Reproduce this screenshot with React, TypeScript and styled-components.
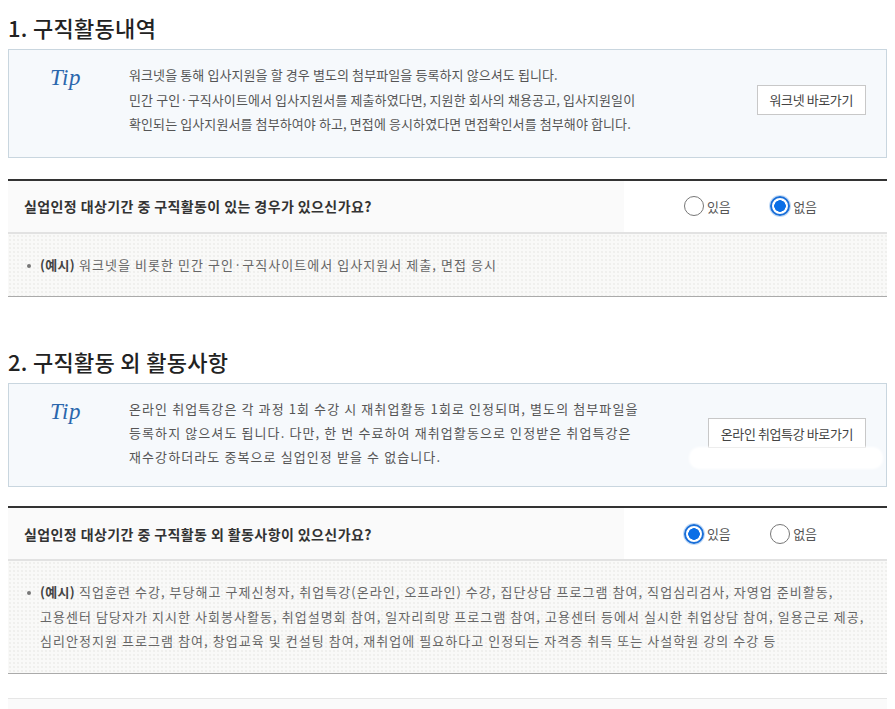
import styled, { createGlobalStyle, css } from "styled-components";

const GlobalStyle = createGlobalStyle`
  html, body {
    margin: 0;
    padding: 0;
    background: #fff;
  }
  body {
    font-family: "Noto Sans CJK KR", "Noto Sans", sans-serif;
    color: #333;
  }
`;

const Page = styled.div`
  padding: 0 8px;
  width: 879px;
`;

const Section = styled.section<{ $gap: number }>`
  margin-top: ${({ $gap }) => $gap}px;
`;

const SectionTitle = styled.h2`
  margin: 0 0 4px;
  height: 36px;
  line-height: 36px;
  font-size: 22px;
  font-weight: 500;
  color: #222;
  letter-spacing: 0.3px;
`;

const TipBox = styled.div<{ $padBottom: number }>`
  position: relative;
  display: grid;
  grid-template-columns: 120px 1fr auto;
  align-items: center;
  padding: 13px 20px ${({ $padBottom }) => $padBottom}px 0;
  background: #f6f9fc;
  border: 1px solid #c9d6df;
`;

const TipMark = styled.span`
  align-self: start;
  padding: 3px 0 0 41px;
  font-family: "Liberation Serif", serif;
  font-style: italic;
  font-size: 23px;
  line-height: 24px;
  color: #2b67ad;
  letter-spacing: 0.5px;
`;

const TipText = styled.p<{ $tight?: boolean }>`
  margin: 0;
  font-size: 13px;
  color: #555;
  white-space: nowrap;
  ${({ $tight }) =>
    $tight
      ? css`
          line-height: 24.5px;
          letter-spacing: 0.1px;
        `
      : css`
          line-height: 24px;
          letter-spacing: 1.1px;
        `}
`;

const LinkButton = styled.button`
  height: 30px;
  padding: 0 12px;
  background: #fff;
  border: 1px solid #c8c8c8;
  font-family: inherit;
  font-size: 13px;
  color: #444;
  letter-spacing: -0.4px;
  cursor: pointer;
`;

const Smudge = styled.div`
  position: absolute;
  left: 680px;
  top: 63px;
  width: 194px;
  height: 22px;
  background: #fff;
  border-radius: 10px;
  filter: blur(0.8px);
`;

const Question = styled.div<{ $gap: number }>`
  margin-top: ${({ $gap }) => $gap}px;
  border-top: 2px solid #333;
  border-bottom: 1px solid #aaa;
`;

const QuestionRow = styled.div`
  display: grid;
  grid-template-columns: 1fr 263px;
  height: 51px;
  border-bottom: 2px solid #e2e2e2;
`;

const QuestionLabel = styled.div`
  display: flex;
  align-items: center;
  padding-left: 16px;
  background: #fafafa;
  font-size: 14px;
  font-weight: 700;
  color: #333;
  letter-spacing: 0.4px;
`;

const RadioGroup = styled.div`
  display: flex;
  align-items: center;
  justify-content: flex-start;
  gap: 40px;
  padding-left: 60px;
  background: #fff;
`;

const RadioLabel = styled.label`
  display: flex;
  align-items: center;
  gap: 3px;
  font-size: 13px;
  color: #555;
  letter-spacing: -0.3px;
  cursor: pointer;
`;

const RadioDot = styled.span<{ $checked: boolean }>`
  box-sizing: border-box;
  width: 20px;
  height: 20px;
  border-radius: 50%;
  ${({ $checked }) =>
    $checked
      ? css`
          border: 2px solid #1a6fd8;
          background: radial-gradient(circle, #0a6ee6 0 5.5px, #fff 6px);
          box-shadow: 0 0 0 1px #c4dcf7;
        `
      : css`
          border: 1px solid #777;
          background: #fff;
        `}
`;

const Example = styled.ul`
  margin: 0;
  padding: 19px 20px 19px 19px;
  list-style: none;
  background-color: #f9f9f8;
  background-image: radial-gradient(#efefed 0.7px, transparent 1px);
  background-size: 4px 4px;
`;

const ExampleItem = styled.li`
  position: relative;
  padding-left: 13px;
  font-size: 13px;
  line-height: 24.5px;
  color: #666;
  letter-spacing: 1.05px;
  white-space: nowrap;

  &::before {
    content: "";
    position: absolute;
    left: 0;
    top: 11px;
    width: 4px;
    height: 4px;
    border-radius: 50%;
    background: #777;
  }

  b {
    color: #444;
    font-weight: 700;
    letter-spacing: 0.3px;
  }
`;

const NextBlock = styled.div`
  margin-top: 24px;
  height: 20px;
  border-top: 1px solid #e6e6e6;
  background: #fafafa;
`;

function Radios({ yes }: { yes: boolean }) {
  return (
    <RadioGroup>
      <RadioLabel>
        <RadioDot $checked={yes} />
        있음
      </RadioLabel>
      <RadioLabel>
        <RadioDot $checked={!yes} />
        없음
      </RadioLabel>
    </RadioGroup>
  );
}

export default function App() {
  return (
    <Page>
      <GlobalStyle />
      <Section $gap={9}>
        <SectionTitle>1. 구직활동내역</SectionTitle>
        <TipBox $padBottom={20}>
          <TipMark>Tip</TipMark>
          <TipText $tight>
            워크넷을 통해 입사지원을 할 경우 별도의 첨부파일을 등록하지 않으셔도 됩니다.
            <br />
            민간 구인·구직사이트에서 입사지원서를 제출하였다면, 지원한 회사의 채용공고, 입사지원일이
            <br />
            확인되는 입사지원서를 첨부하여야 하고, 면접에 응시하였다면 면접확인서를 첨부해야 합니다.
          </TipText>
          <LinkButton type="button">워크넷 바로가기</LinkButton>
        </TipBox>
        <Question $gap={21}>
          <QuestionRow>
            <QuestionLabel>실업인정 대상기간 중 구직활동이 있는 경우가 있으신가요?</QuestionLabel>
            <Radios yes={false} />
          </QuestionRow>
          <Example>
            <ExampleItem>
              <b>(예시)</b> 워크넷을 비롯한 민간 구인·구직사이트에서 입사지원서 제출, 면접 응시
            </ExampleItem>
          </Example>
        </Question>
      </Section>

      <Section $gap={46}>
        <SectionTitle>2. 구직활동 외 활동사항</SectionTitle>
        <TipBox $padBottom={17}>
          <TipMark>Tip</TipMark>
          <TipText>
            온라인 취업특강은 각 과정 1회 수강 시 재취업활동 1회로 인정되며, 별도의 첨부파일을
            <br />
            등록하지 않으셔도 됩니다. 다만, 한 번 수료하여 재취업활동으로 인정받은 취업특강은
            <br />
            재수강하더라도 중복으로 실업인정 받을 수 없습니다.
          </TipText>
          <LinkButton type="button">온라인 취업특강 바로가기</LinkButton>
          <Smudge />
        </TipBox>
        <Question $gap={19}>
          <QuestionRow>
            <QuestionLabel>실업인정 대상기간 중 구직활동 외 활동사항이 있으신가요?</QuestionLabel>
            <Radios yes />
          </QuestionRow>
          <Example>
            <ExampleItem>
              <b>(예시)</b> 직업훈련 수강, 부당해고 구제신청자, 취업특강(온라인, 오프라인) 수강, 집단상담 프로그램 참여, 직업심리검사, 자영업 준비활동,
              <br />
              고용센터 담당자가 지시한 사회봉사활동, 취업설명회 참여, 일자리희망 프로그램 참여, 고용센터 등에서 실시한 취업상담 참여, 일용근로 제공,
              <br />
              심리안정지원 프로그램 참여, 창업교육 및 컨설팅 참여, 재취업에 필요하다고 인정되는 자격증 취득 또는 사설학원 강의 수강 등
            </ExampleItem>
          </Example>
        </Question>
        <NextBlock />
      </Section>
    </Page>
  );
}
